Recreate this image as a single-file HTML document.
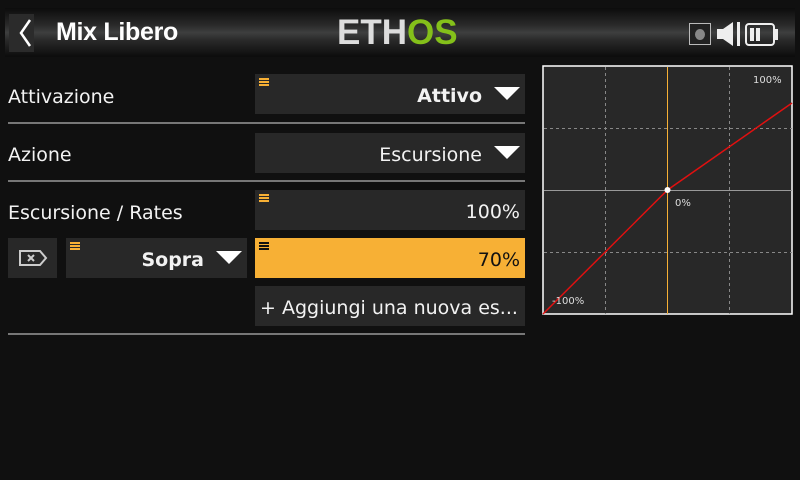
<!DOCTYPE html>
<html><head><style>
*{margin:0;padding:0;box-sizing:border-box}
body{width:800px;height:480px;background:#101010;position:relative;overflow:hidden;font-family:"DejaVu Sans","Liberation Sans",sans-serif;color:#f2f2f2}
.a{position:absolute}
.hdr{left:5px;top:8px;width:790px;height:49px;background:linear-gradient(#0c0c0c,#2a2a2a 35%,#3e3f3f 50%,#2a2a2a 65%,#0c0c0c)}
.box{position:absolute;background:#282828}
.lbl{position:absolute;left:8px;font-size:19px}
.sep{position:absolute;left:8px;width:517px;height:2px;background:#777}
.val{position:absolute;right:5px;top:0;line-height:45px;font-size:19px;white-space:nowrap}
.tri{display:inline-block;width:0;height:0;border-left:13px solid transparent;border-right:13px solid transparent;border-top:13px solid #fff;margin-left:12px;vertical-align:2px}
.ham{position:absolute;left:4px;top:4px;width:10px;height:8px;background:repeating-linear-gradient(#f7b035 0 2px,transparent 2px 3px)}
</style></head><body>
<div class="a hdr"></div>
<div class="a" style="left:9px;top:14px;width:25px;height:38px;background:#2b2b2b"></div>
<svg class="a" style="left:9px;top:14px" width="25" height="38"><path d="M21 6 L12 19 L21 32" stroke="#fff" stroke-width="2.5" fill="none"/></svg>
<div class="a" style="left:56px;top:18px;font-size:25px;font-weight:bold;font-family:'Liberation Sans',sans-serif;color:#fff;letter-spacing:-0.3px">Mix Libero</div>
<div class="a" style="left:337px;top:13px;font-size:35px;font-weight:bold;font-family:'Liberation Sans',sans-serif;letter-spacing:0px;color:#ddd">ETH<span style="color:#84c01a">OS</span></div>
<div class="a" style="left:689px;top:23px;width:22px;height:22px;border:1px solid #bbb;background:#222"></div>
<div class="a" style="left:695px;top:29px;width:10px;height:11px;border-radius:50%;background:#888"></div>
<svg class="a" style="left:716px;top:21px" width="26" height="26"><path d="M1 8h6l10-7v24l-10-7H1z" fill="#eee"/><rect x="21" y="1" width="3" height="24" fill="#eee"/></svg>
<div class="a" style="left:745px;top:23px;width:30px;height:23px;border:2px solid #eee;border-radius:4px"></div>
<div class="a" style="left:775px;top:29px;width:3px;height:11px;background:#eee"></div>
<div class="a" style="left:750px;top:28px;width:4px;height:13px;background:#eee"></div>
<div class="a" style="left:756px;top:28px;width:4px;height:13px;background:#eee"></div>

<div class="lbl" style="top:86px">Attivazione</div>
<div class="box" style="left:255px;top:74px;width:270px;height:40px"><div class="ham"></div><div class="val" style="font-weight:bold">Attivo<span class="tri"></span></div></div>
<div class="sep" style="top:122px"></div>
<div class="lbl" style="top:144px">Azione</div>
<div class="box" style="left:255px;top:133px;width:270px;height:40px"><div class="val">Escursione<span class="tri"></span></div></div>
<div class="sep" style="top:180px"></div>
<div class="lbl" style="top:202px">Escursione / Rates</div>
<div class="box" style="left:255px;top:190px;width:270px;height:40px"><div class="ham"></div><div class="val">100%</div></div>
<div class="box" style="left:8px;top:238px;width:49px;height:40px"></div>
<svg class="a" style="left:18px;top:249px" width="30" height="18"><path d="M2 2h20l6 7-6 7H2z" fill="none" stroke="#ccc" stroke-width="2"/><path d="M10 6l6 6M16 6l-6 6" stroke="#ccc" stroke-width="2"/></svg>
<div class="box" style="left:66px;top:238px;width:181px;height:40px"><div class="ham"></div><div class="val" style="font-weight:bold">Sopra<span class="tri"></span></div></div>
<div class="box" style="left:255px;top:238px;width:270px;height:40px;background:#f7b035"><div class="ham" style="background:repeating-linear-gradient(#111 0 2px,transparent 2px 3px)"></div><div class="val" style="color:#111">70%</div></div>
<div class="box" style="left:255px;top:286px;width:270px;height:40px"><div class="val" style="left:5px;right:auto">+ Aggiungi una nuova es...</div></div>
<div class="sep" style="top:333px"></div>

<svg class="a" style="left:542px;top:65px" width="252" height="251">
<rect x="1" y="1" width="249" height="248" fill="#282828" stroke="#fff" stroke-width="1.5"/>
<g stroke="#888" stroke-dasharray="3 3" stroke-width="1"><line x1="63.5" y1="2" x2="63.5" y2="249"/><line x1="187.5" y1="2" x2="187.5" y2="249"/><line x1="2" y1="63.5" x2="250" y2="63.5"/><line x1="2" y1="187.5" x2="250" y2="187.5"/></g>
<line x1="2" y1="125.5" x2="250" y2="125.5" stroke="#999"/>
<line x1="125.5" y1="2" x2="125.5" y2="249" stroke="#f7b035"/>
<polyline points="1,249 125.5,125 250,38" fill="none" stroke="#e01010" stroke-width="1.5"/>
<circle cx="125.5" cy="125" r="3" fill="#fff"/>
<text x="211" y="18" font-size="10" fill="#ddd" font-family="DejaVu Sans">100%</text>
<text x="133" y="141" font-size="10" fill="#ddd" font-family="DejaVu Sans">0%</text>
<text x="10" y="239" font-size="10" fill="#ddd" font-family="DejaVu Sans">-100%</text>
</svg>
</body></html>
